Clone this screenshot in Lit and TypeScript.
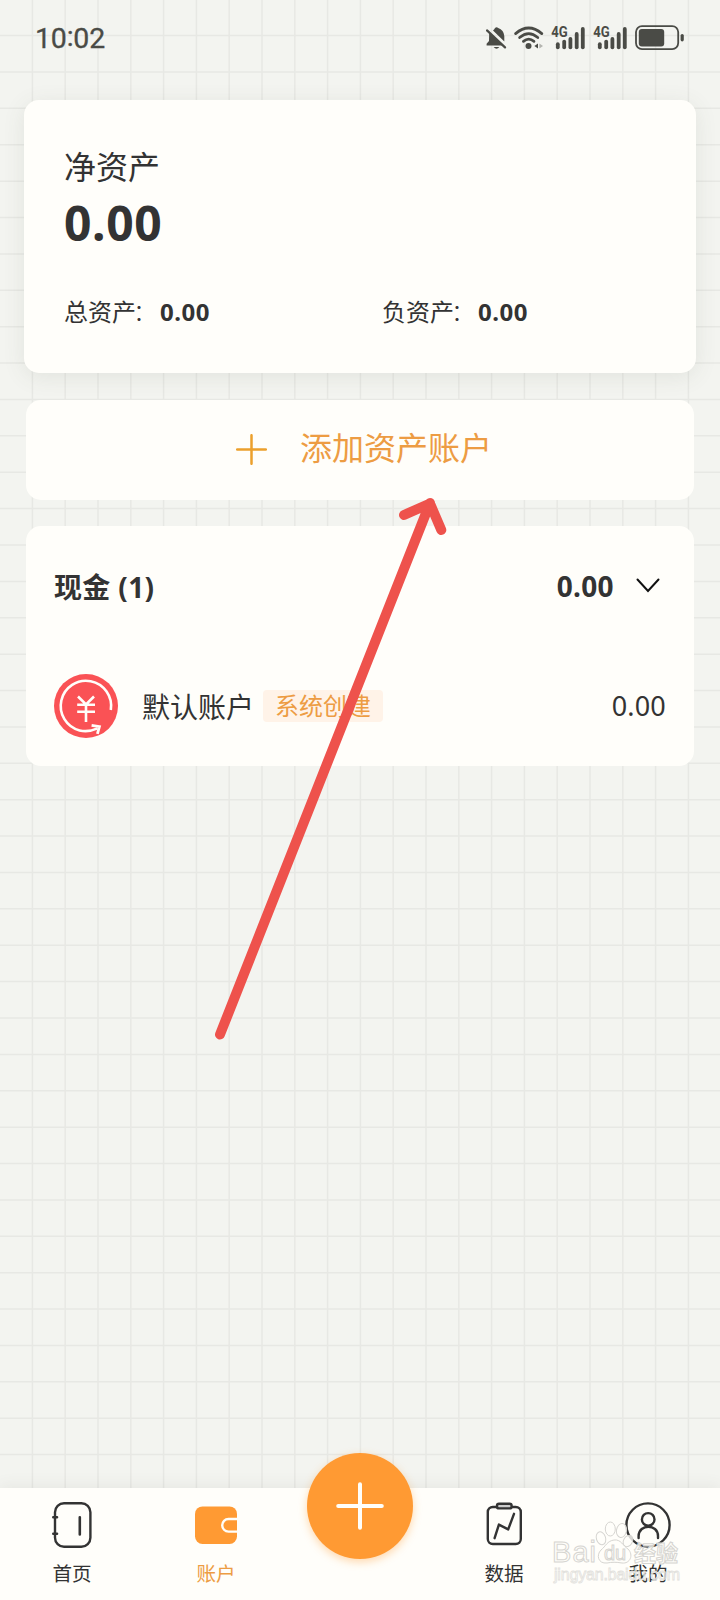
import { LitElement, html, svg, css } from "lit";
import { customElement } from "lit/decorators.js";

const columns = Array.from({ length: 21 }, (_, i) => 32.4 + i * 32.8);
const rows = Array.from({ length: 40 }, (_, i) => 35.6 + i * 36.385);
const bars = [
  [0, 42.3],
  [6.4, 39.7],
  [12.6, 37],
  [18.9, 32],
  [25, 27],
];

@customElement("grid-paper")
class GridPaper extends LitElement {
  static styles = css`
    :host { position: absolute; inset: 0; }
    svg { display: block; }
  `;
  render() {
    return html`<svg width="720" height="1600" viewBox="0 0 720 1600" stroke="#e7e8e4" stroke-width="1.5">
      ${columns.map((x) => svg`<line x1=${x} x2=${x} y1="0" y2="1600" />`)}
      ${rows.map((y) => svg`<line x1="0" x2="720" y1=${y} y2=${y} />`)}
    </svg>`;
  }
}

@customElement("status-bar")
class StatusBar extends LitElement {
  static styles = css`
    :host {
      display: flex; box-sizing: border-box; height: 76px; padding: 0 35px 0 35px;
      align-items: center; justify-content: space-between; color: #4a4b46; fill: #4a4b46;
    }
    .time { font: 400 28.5px/34px Roboto, sans-serif; letter-spacing: -.2px; -webkit-text-stroke: .3px #4a4b46; padding-top: 2px; }
    .colon { position: relative; top: -2px; }
    .icons { display: flex; align-items: center; }
    .icons svg { display: block; }
    .bell { margin-right: 7px; }
    .wifi { margin-right: 7px; }
    .signal { margin-right: 6.5px; }
    .battery { margin-left: 1px; }
    .net { font: 700 14px Roboto, sans-serif; }
  `;
  signal() {
    return html`<svg class="signal" width="35" height="26" viewBox="551 25 35 26">
      <text class="net" x="551.2" y="37" textLength="16.5" lengthAdjust="spacingAndGlyphs">4G</text>
      ${bars.map(([x, y]) => svg`<rect x=${555.9 + x} y=${y} width="3.8" height=${49.2 - y} rx="1.9" />`)}
    </svg>`;
  }
  render() {
    return html`
      <div class="time">10<span class="colon">:</span>02</div>
      <div class="icons">
        <svg class="bell" width="21" height="26" viewBox="486 25 21 26">
          <path d="M493 30.4 Q494.5 29.2 495 28 Q496.6 26.4 498.2 28 Q503.8 30 504.3 36 V41.6 Z" />
          <path d="M489.2 33 L503 45.4 H486.6 V43.8 L489 41 Z" />
          <path d="M493.6 47 H499.4 Q496.5 50.6 493.6 47 Z" />
          <path d="M487 30.4 L505 47.4" fill="none" stroke="#4a4b46" stroke-width="2.2" stroke-linecap="round" />
        </svg>
        <svg class="wifi" width="30" height="26" viewBox="514 25 30 26">
          <g fill="none" stroke="#4a4b46" stroke-width="2.7" stroke-linecap="round">
            <path d="M515.6 33.6 Q528.7 22.4 541.8 33.6" />
            <path d="M519.6 37.6 Q528.7 29.8 537.8 37.6" />
            <path d="M523.4 41.4 Q528.7 37 534 41.4" />
          </g>
          <circle cx="528.5" cy="46" r="3" />
          <path d="M538 43.6 V48.6 L534.4 46.1 Z" />
          <path d="M539.4 43.6 V48.6 L543 46.1 Z" fill="#b4b5b0" />
        </svg>
        ${this.signal()}${this.signal()}
        <svg class="battery" width="50" height="26" viewBox="634 25 50 26">
          <rect x="635" y="26.1" width="42.2" height="23" rx="6" fill="none" stroke="#4a4b46" stroke-width="1.8" />
          <rect x="637.8" y="29" width="25.4" height="17.4" rx="3" />
          <rect x="679.6" y="34" width="3.2" height="7.4" rx="1.6" />
        </svg>
      </div>`;
  }
}

@customElement("tab-bar")
class TabBar extends LitElement {
  static styles = css`
    :host {
      display: grid; grid-template-columns: repeat(5, 144px); box-sizing: border-box; height: 112px;
      background: #fffefa; color: #333; box-shadow: 0 -3px 14px rgba(80, 85, 70, .07);
    }
    .tab { display: flex; flex-direction: column; align-items: center; padding-top: 12px; font-size: 19.6px; line-height: 28px; }
    .tab svg { display: block; margin-bottom: 10px; fill: none; stroke: #333; stroke-width: 2.4; stroke-linecap: round; stroke-linejoin: round; }
    .active { color: #ed9c43; }
    .fab {
      width: 106px; height: 106px; margin: -35px auto 0; border-radius: 50%; background: #ff9a33;
      display: flex; align-items: center; justify-content: center; box-shadow: 0 3px 9px rgba(255, 154, 51, .38);
    }
    .fab svg { stroke: #fffefa; stroke-width: 4; stroke-linecap: round; }
  `;
  render() {
    return html`
      <div class="tab">
        <svg width="44" height="50" viewBox="50 1500 44 50">
          <rect x="55" y="1503.3" width="35.4" height="43.4" rx="9" />
          <path d="M53.3 1517.2 H57 M53.3 1533.7 H57 M79.8 1517.2 V1534.4" stroke-width="2.6" />
        </svg>首页
      </div>
      <div class="tab active">
        <svg width="44" height="50" viewBox="194 1500 44 50">
          <rect x="195" y="1506.4" width="42" height="37.6" rx="7.5" fill="#ff9a33" stroke="none" />
          <path d="M238 1519 H228.5 A6.2 6.2 0 0 0 228.5 1531.6 H238" stroke="#fffefa" stroke-linecap="butt" />
        </svg>账户
      </div>
      <div><div class="fab"><svg width="50" height="50" viewBox="0 0 50 50"><path d="M25 3.2 V46.8 M3.2 25 H46.8" /></svg></div></div>
      <div class="tab">
        <svg width="44" height="50" viewBox="482 1500 44 50">
          <rect x="487.8" y="1507" width="33" height="37" rx="5" />
          <rect x="497" y="1503.8" width="14.6" height="4.6" rx="2" fill="#ccc" />
          <path d="M494.6 1538.2 L498.9 1524.6 L508.2 1529.4 L514 1513.8" />
        </svg>数据
      </div>
      <div class="tab">
        <svg width="46" height="50" viewBox="625 1500 46 50">
          <circle cx="648" cy="1525" r="21.6" />
          <circle cx="648.2" cy="1519.4" r="6.3" />
          <path d="M638.6 1538 V1536 C639 1523.6 657.8 1523.6 658 1536 V1538" />
        </svg>我的
      </div>`;
  }
}

@customElement("page-overlay")
class PageOverlay extends LitElement {
  static styles = css`
    :host { position: absolute; inset: 0; pointer-events: none; }
    svg { display: block; }
    .mark { fill: #fffefa; fill-opacity: .8; stroke: #d6d5d1; stroke-width: 1; }
    .brand { font: 400 29px "Liberation Sans", sans-serif; }
    .du { font: 400 20px "Liberation Sans", sans-serif; }
    .cn { font: 700 22px "Noto Sans CJK SC", sans-serif; }
    .site { font: 400 16px "Liberation Sans", sans-serif; stroke: #e2e1dd; stroke-width: .8; fill-opacity: .5; }
  `;
  render() {
    return html`<svg width="720" height="1600" viewBox="0 0 720 1600">
      <path d="M220 1034.5 L430 503 M404 515 L430 503.5 L441.3 530" fill="none" stroke="#ee524c"
        stroke-width="10" stroke-linecap="round" stroke-linejoin="round" />
      <g class="mark">
        <text class="brand" x="552" y="1562" textLength="44">Bai</text>
        <ellipse cx="601" cy="1538.3" rx="4.6" ry="6.6" transform="rotate(-18 601 1538.3)" />
        <ellipse cx="610.3" cy="1529" rx="5" ry="7" />
        <ellipse cx="621.5" cy="1530.5" rx="5" ry="7" transform="rotate(10 621.5 1530.5)" />
        <ellipse cx="628" cy="1541" rx="4.4" ry="6" transform="rotate(30 628 1541)" />
        <path d="M614 1540 C621 1539 623 1546 628 1549 C634 1555 630 1564 622 1563 C616 1562 612 1562 607 1563 C598 1564 596 1555 601 1550 C606 1546 607 1541 614 1540 Z" />
        <text class="du" x="604" y="1559.5" textLength="22">du</text>
        <text class="cn" x="634" y="1560.5">经验</text>
        <text class="site" x="554" y="1579.5" textLength="126">jingyan.baidu.com</text>
      </g>
    </svg>`;
  }
}

@customElement("app-root")
class AppRoot extends LitElement {
  static styles = css`
    :host {
      display: flex; flex-direction: column; position: relative; box-sizing: border-box; width: 720px; height: 1600px;
      overflow: hidden; background: #f3f4f0; color: #333;
      font-family: "Noto Sans", "Noto Sans CJK SC", sans-serif;
    }
    status-bar, main, tab-bar { position: relative; }
    main { flex: 1; display: flex; flex-direction: column; padding: 24px 24px 0; }
    .card { background: #fffefa; border-radius: 15px; box-sizing: border-box; }
    .net { height: 273px; padding: 46px 40px 0 40px; box-shadow: 0 4px 22px rgba(80, 85, 70, .1); }
    .label { font-size: 32px; line-height: 42px; }
    .total { font-size: 48px; line-height: 60px; font-weight: 700; margin-top: 5px; letter-spacing: .6px; }
    .split { display: grid; grid-template-columns: 318px 1fr; margin-top: 42px; font-size: 24px; line-height: 34px; }
    .split div { display: flex; }
    .split b { letter-spacing: .5px; }
    .split i { font-style: normal; font-weight: 300; width: 24px; margin: 0 3px 0 -3px; }
    .split b { margin-left: 0; }
    .add { margin: 27px 2px 0; height: 100px; display: flex; padding: 0 0 5px 210px; align-items: center; gap: 33px; font-size: 32px; color: #ed9c43; }
    .add span { margin-top: -3px; }
    .add svg { display: block; margin-top: 4px; stroke: #eca02c; stroke-width: 2.5; stroke-linecap: round; }
    .cash { margin: 26px 2px 0; height: 240px; padding: 0 28px; }
    .head { display: flex; align-items: center; height: 119px; font-size: 28px; font-weight: 700; letter-spacing: .35px; }
    .amount { margin-left: auto; margin-right: 22px; }
    .head svg { display: block; margin-right: 6px; fill: none; stroke: #111; stroke-width: 2; stroke-linecap: round; }
    .row { display: flex; align-items: center; height: 121px; font-size: 28px; }
    .row svg { display: block; margin-right: 24px; }
    .tag { margin-left: 9px; width: 120px; height: 32px; line-height: 32px; text-align: center; font-size: 24px; color: #ed9c43; background: #fff3e8; border-radius: 4px; }
    .value { margin-left: auto; font-size: 27px; letter-spacing: .2px; }
  `;
  render() {
    return html`
      <grid-paper></grid-paper>
      <status-bar></status-bar>
      <main>
        <section class="card net">
          <div class="label">净资产</div>
          <div class="total">0.00</div>
          <div class="split">
            <div>总资产<i>：</i><b>0.00</b></div>
            <div>负资产<i>：</i><b>0.00</b></div>
          </div>
        </section>
        <section class="card add">
          <svg width="31" height="31" viewBox="0 0 31 31"><path d="M15.5 1.2 V29.8 M1.2 15.5 H29.8" /></svg>
          <span>添加资产账户</span>
        </section>
        <section class="card cash">
          <div class="head">
            <span>现金 (1)</span><span class="amount">0.00</span>
            <svg width="24" height="16" viewBox="0 0 24 16"><path d="M1.5 1.5 L12 13 L22.5 1.5" /></svg>
          </div>
          <div class="row">
            <svg width="64" height="64" viewBox="0 0 64 64" fill="none" stroke="#fffefa" stroke-width="2.6">
              <circle cx="32" cy="32" r="32" fill="#fa5255" stroke="none" />
              <path d="M56.8 36 A25.2 25.2 0 1 0 25.6 56.4 Q34 58.6 43.6 54.4" />
              <path d="M37.6 51.4 L45.4 52.6 L43.4 59.8" stroke-width="2.8" />
              <path d="M24 22.5 L32 30.5 L40 22.5 M32 30.5 V48 M23.2 30.8 H41 M23.2 37.8 H41" />
            </svg>
            <span>默认账户</span><span class="tag">系统创建</span><span class="value">0.00</span>
          </div>
        </section>
      </main>
      <tab-bar></tab-bar>
      <page-overlay></page-overlay>`;
  }
}
